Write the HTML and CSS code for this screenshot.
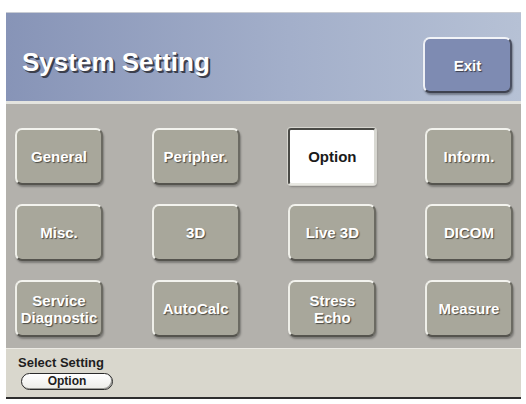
FILE: index.html
```html
<!DOCTYPE html>
<html lang="en">
<head>
    <meta charset="UTF-8">
    <meta name="viewport" content="width=device-width, initial-scale=1.0">
    <title>System Setting</title>

    <link rel="stylesheet" href="styles.css">
</head>
<body>
  <div class="panel">
    <div class="header">
      <h1 class="title">System Setting</h1>
      <button class="exit">Exit</button>
    </div>

    <div class="grid">
      <button class="key">General</button>
      <button class="key">Peripher.</button>
      <button class="key selected">Option</button>
      <button class="key">Inform.</button>

      <button class="key">Misc.</button>
      <button class="key">3D</button>
      <button class="key">Live 3D</button>
      <button class="key">DICOM</button>

      <button class="key">Service<br>Diagnostic</button>
      <button class="key">AutoCalc</button>
      <button class="key">Stress<br>Echo</button>
      <button class="key">Measure</button>
    </div>

    <div class="status">
      <label class="status-label">Select Setting</label>
      <div class="pill">Option</div>
    </div>
  </div>
</body>
</html>
```

FILE: styles.css
```css
body {
    font-family: "Liberation Sans", Arial, sans-serif;
    background-color: #fff;
    margin: 0;
    padding: 0;
}

.panel {
    width: 515px;
    margin: 12px 0 0 6px;
    display: flex;
    flex-direction: column;
}

/* blue title bar */
.header {
    height: 92px;
    display: flex;
    justify-content: space-between;
    align-items: flex-end;
    padding: 0 9px 8px 16px;
    box-sizing: border-box;
    background: linear-gradient(to right, #8794b7, #a3afca 55%, #b6c1d5);
    border-top: 1px solid #c8ccd4;
    border-bottom: 3px solid #e4e4df;
}

.title {
    align-self: center;
    margin: 18px 0 0 0;
    font-size: 26px;
    font-weight: bold;
    color: #fff;
    text-shadow: 2px 2px 0 #3c3f4c, 1px 1px 1px #3c3f4c;
}

.exit {
    width: 89px;
    height: 56px;
    font-family: inherit;
    font-size: 15px;
    font-weight: bold;
    color: #fff;
    background-color: #7e8bb2;
    border: 2px solid;
    border-color: #f2f4f8 #4a4f60 #3e4250 #eef0f5;
    border-radius: 7px;
    text-shadow: 1px 1px 1px #3a3d4a;
    box-shadow: 1px 2px 2px rgba(0, 0, 0, 0.35);
    padding: 0;
}

/* grey key area */
.grid {
    height: 244px;
    box-sizing: border-box;
    padding: 24px 8px 11px 9px;
    background-color: #b3b1ac;
    display: grid;
    grid-template-columns: repeat(4, 88px);
    grid-template-rows: repeat(3, 57px);
    justify-content: space-between;
    row-gap: 19px;
}

.key {
    font-family: inherit;
    font-size: 15px;
    font-weight: bold;
    line-height: 17px;
    color: #fff;
    background-color: #a8a79b;
    border: 2px solid;
    border-color: #f3f3ee #6b6a62 #55544e #efefe9;
    border-radius: 7px;
    text-shadow: 1px 1px 1px #4b4a44;
    box-shadow: 1px 2px 2px rgba(0, 0, 0, 0.3);
    padding: 0;
    cursor: pointer;
}

.key.selected {
    color: #1a1a1a;
    background-color: #fff;
    border-color: #4a4a46 #d8d8d2 #e8e8e2 #4a4a46;
    border-radius: 3px;
    text-shadow: none;
    box-shadow: 0 0 0 1px #d6d5cf, 1px 2px 2px rgba(0, 0, 0, 0.25);
}

/* bottom status bar */
.status {
    height: 51px;
    box-sizing: border-box;
    padding: 6px 0 0 12px;
    background-color: #d9d7cd;
    border-top: 1px solid #eceae4;
    border-bottom: 2px solid #2e2e2e;
}

.status-label {
    display: block;
    font-size: 13px;
    font-weight: bold;
    line-height: 15px;
    color: #1e1e1e;
}

.pill {
    width: 92px;
    height: 17px;
    margin: 3px 0 0 3px;
    box-sizing: border-box;
    border: 1px solid #2a2a2a;
    border-radius: 9px;
    background: linear-gradient(#ffffff, #ecece8);
    box-shadow: inset -1px -1px 0 #9a9a96;
    font-size: 12px;
    font-weight: bold;
    line-height: 15px;
    text-align: center;
    color: #1e1e1e;
}
```
